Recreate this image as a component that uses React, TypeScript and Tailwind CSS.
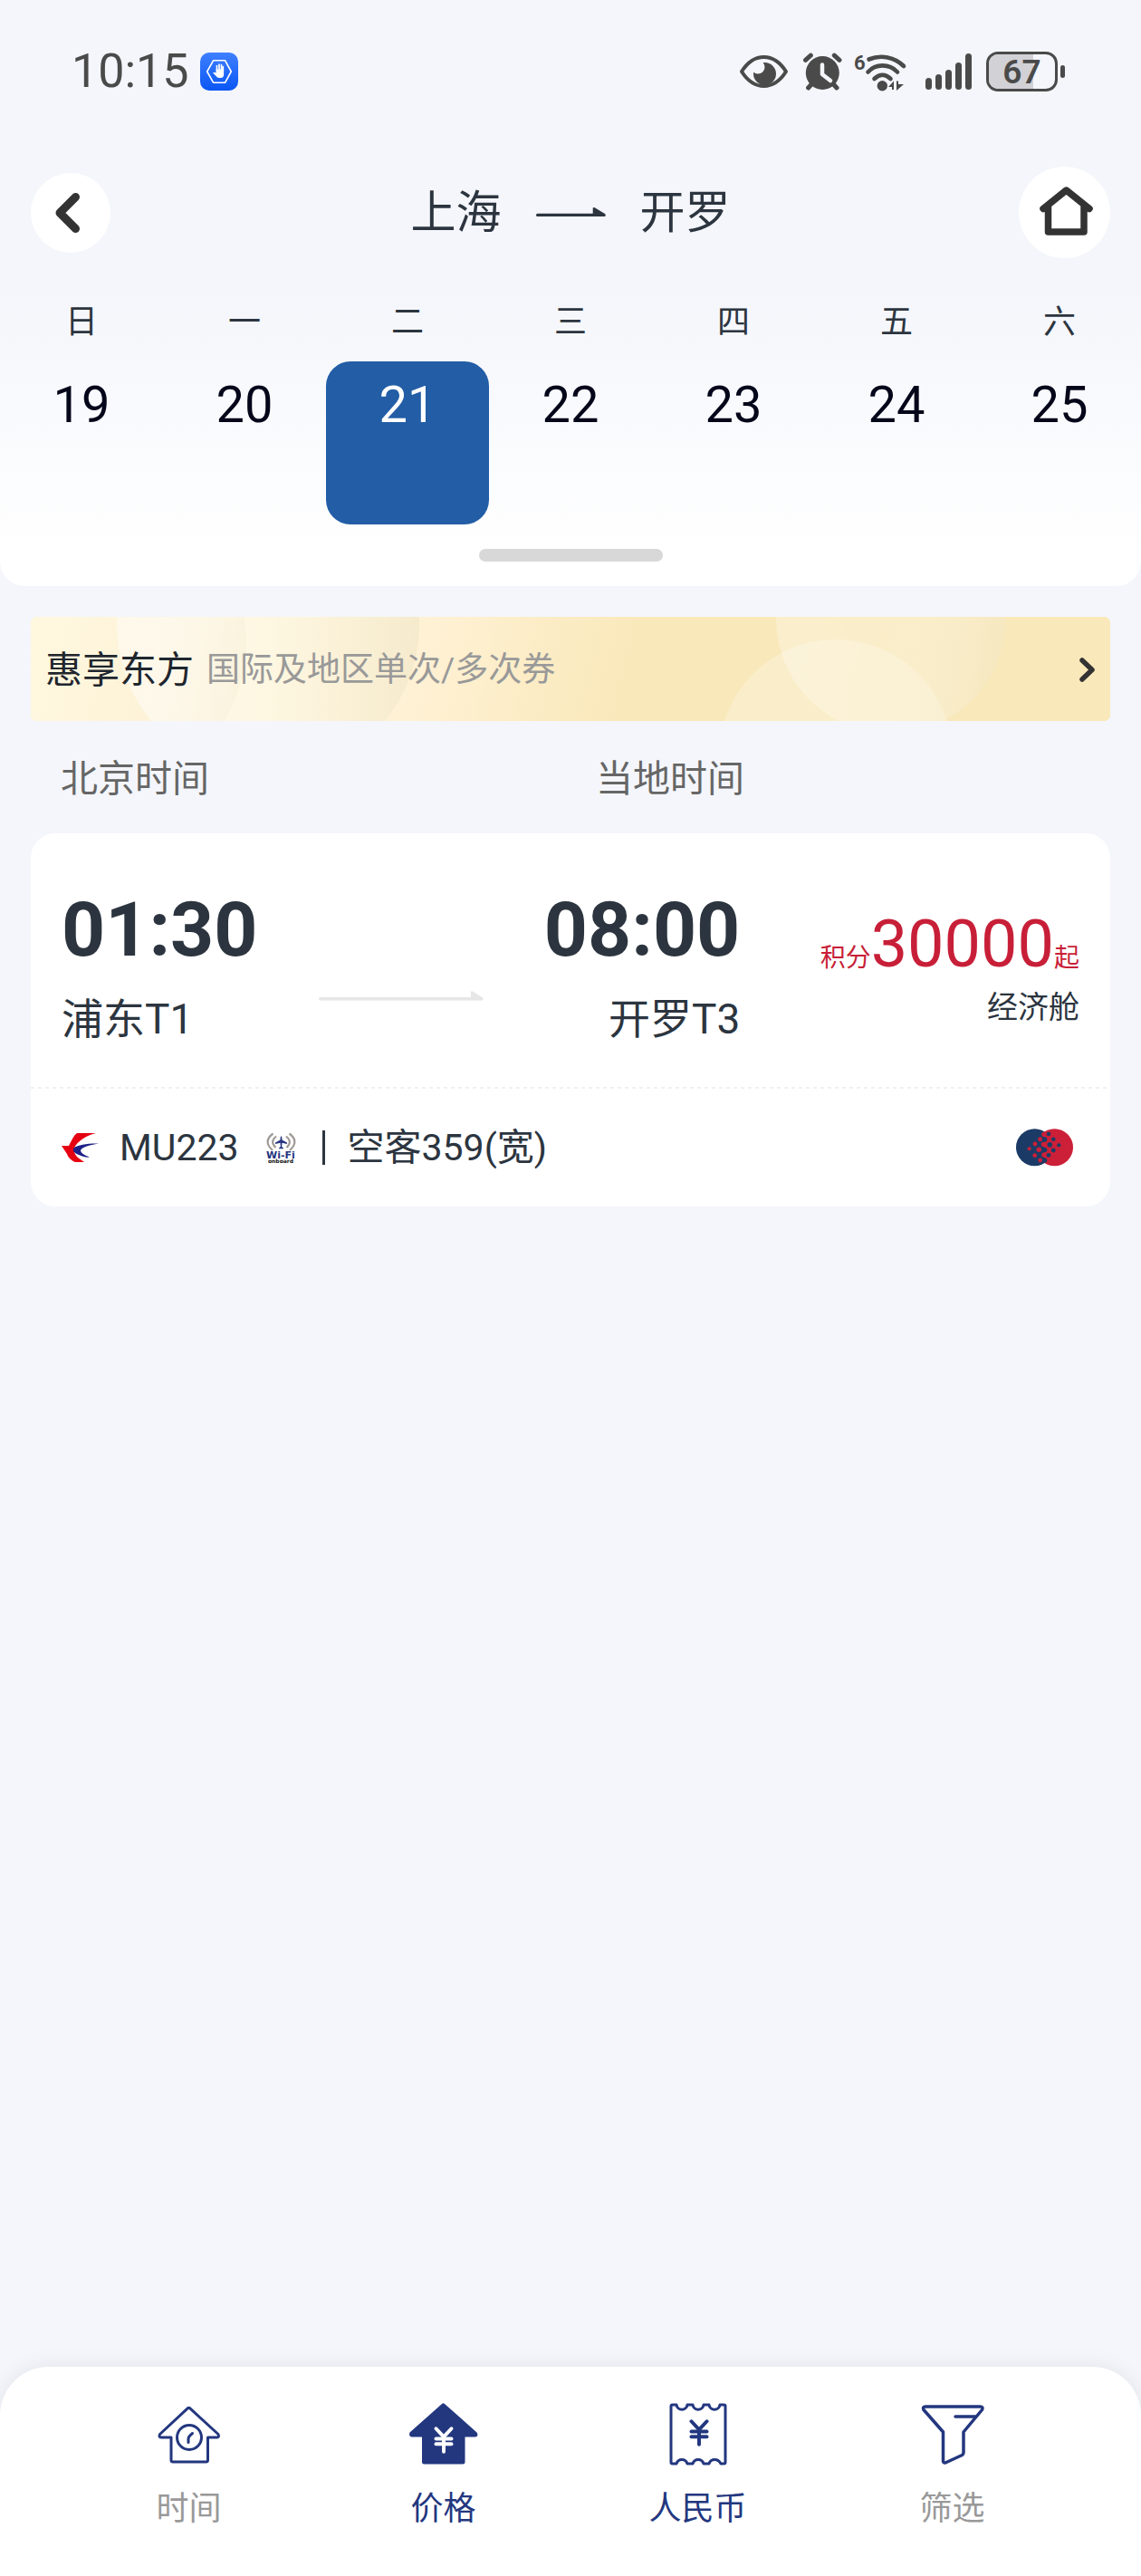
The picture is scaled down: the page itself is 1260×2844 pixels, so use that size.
import { useState } from "react";
import { JapaneseYen } from "lucide-react";
import clsx from "clsx";

const days = [
  { week: "日", date: 19 },
  { week: "一", date: 20 },
  { week: "二", date: 21 },
  { week: "三", date: 22 },
  { week: "四", date: 23 },
  { week: "五", date: 24 },
  { week: "六", date: 25 },
];

const tabs = [
  { label: "时间", icon: ClockHouseIcon, active: false },
  { label: "价格", icon: PriceHouseIcon, active: true },
  { label: "人民币", icon: ReceiptIcon, active: true },
  { label: "筛选", icon: FunnelIcon, active: false },
];

/* Status bar */

function ShieldAppIcon() {
  return (
    <svg width="42" height="42" viewBox="0 0 42 42" aria-hidden="true">
      <defs>
        <linearGradient id="appBg" x1="0" y1="0" x2="0" y2="1">
          <stop offset="0" stopColor="#3f80ff" />
          <stop offset="1" stopColor="#0a56f5" />
        </linearGradient>
      </defs>
      <rect width="42" height="42" rx="10" fill="url(#appBg)" />
      <path
        d="M7.7 21L14.7 8.7H27.5L34.3 21L27.5 33.3H14.7Z"
        fill="none"
        stroke="#fff"
        strokeWidth="1.6"
        strokeLinejoin="round"
      />
      <path
        d="M18.5 20V14.5M21 19V13.2M23.5 19V13.7M25.3 20V15.5"
        stroke="#fff"
        strokeWidth="1.7"
        strokeLinecap="round"
      />
      <path d="M17.6 18.5H26.1V24.5Q26 28 22.5 28H21Q19.5 28 18.3 26.7L14.2 22.6Q15 21 17.6 22.4Z" fill="#fff" />
    </svg>
  );
}

function EyeIcon() {
  return (
    <svg width="55" height="40" viewBox="0 0 55 40" aria-hidden="true">
      <path
        d="M3 20C10 9 18 4 27.5 4S45 9 52 20C45 31 37 36 27.5 36S10 31 3 20Z"
        fill="none"
        stroke="#4a4a4a"
        strokeWidth="4"
        strokeLinejoin="round"
      />
      <circle cx="28.5" cy="22.5" r="12.5" fill="#4a4a4a" />
      <circle cx="21" cy="15" r="7.5" fill="#f4f6fb" />
    </svg>
  );
}

function AlarmIcon() {
  return (
    <svg width="45" height="42" viewBox="0 0 45 42" fill="none" strokeLinecap="round" aria-hidden="true">
      <circle cx="22.3" cy="22.5" r="18.5" fill="#4a4a4a" />
      <path
        d="M3.5 8.3L9.3 3.2M35.3 3.2L41 8.3M6.6 39L12 33M38 39L32.6 33"
        stroke="#4a4a4a"
        strokeWidth="5"
      />
      <path d="M22 13.5V24L31 31" stroke="#f4f6fb" strokeWidth="4.5" strokeLinejoin="round" />
    </svg>
  );
}

function WifiSixIcon() {
  return (
    <svg className="overflow-visible" width="60" height="46" viewBox="0 0 60 46" aria-hidden="true">
      <text x="1" y="21" fontSize="22" fontWeight="700" fill="#4a4a4a">
        6
      </text>
      <g fill="none" stroke="#4a4a4a" strokeWidth="4.6" strokeLinecap="round">
        <path d="M17.5 9.5C31 4 46 7 56 17" />
        <path d="M16.5 23.5C25 14 40 14 49 23.5" />
        <path d="M23.5 31C29 25.5 36 25.5 41.5 31" />
      </g>
      <circle cx="32.3" cy="38.7" r="5.7" fill="#4a4a4a" />
      <path d="M39 40L45 33.5V43H43V40ZM48 33.5H50V37H56L48 44Z" fill="#4a4a4a" />
    </svg>
  );
}

function SignalIcon() {
  return (
    <svg width="52" height="42" viewBox="0 0 52 42" fill="#4a4a4a" aria-hidden="true">
      <rect x="0" y="28" width="7" height="13" rx="3.5" />
      <rect x="11" y="24" width="7" height="17" rx="3.5" />
      <rect x="22" y="19" width="7" height="22" rx="3.5" />
      <rect x="33" y="11" width="7" height="30" rx="3.5" />
      <rect x="44" y="1" width="7" height="40" rx="3.5" />
    </svg>
  );
}

function Battery({ level }: { level: number }) {
  return (
    <div className="flex items-center gap-[3px]">
      <div className="relative flex h-11 w-[79px] items-center justify-center overflow-hidden rounded-[13px] border-3 border-[#4a4a4a]">
        <div className="absolute inset-y-0 left-0 bg-[#d1d1d6]" style={{ width: `${level}%` }} />
        <span className="relative text-[37px] leading-none font-semibold">{level}</span>
      </div>
      <div className="h-[14px] w-[5px] rounded-full bg-[#4a4a4a]" />
    </div>
  );
}

function StatusBar() {
  return (
    <div className="flex h-11 items-center justify-between pr-[84px] pl-[79px] text-[#4a4a4a]">
      <div className="flex items-center gap-3">
        <span className="text-[52px] leading-none">10:15</span>
        <ShieldAppIcon />
      </div>
      <div className="flex items-center">
        <EyeIcon />
        <span className="ml-[15px]">
          <AlarmIcon />
        </span>
        <span className="ml-[11px]">
          <WifiSixIcon />
        </span>
        <span className="ml-5">
          <SignalIcon />
        </span>
        <span className="ml-[15px]">
          <Battery level={67} />
        </span>
      </div>
    </div>
  );
}

/* Header */

function RouteArrow() {
  return (
    <svg width="77" height="11" viewBox="0 0 77 11" aria-hidden="true">
      <path d="M1.5 6.8H62.7V0.5Q64 -0.5 66 1L76 7Q77.5 8.5 76 10H1.5Q0 10 0 8.4Q0 6.8 1.5 6.8Z" fill="#2c353f" />
    </svg>
  );
}

function Header() {
  const [selected, setSelected] = useState(21);

  return (
    <header className="rounded-b-[27px] bg-linear-to-b from-[#f4f6fb] from-50% to-white to-95% pt-[57px] pb-[27px]">
      <StatusBar />

      <div className="mt-[83px] flex items-center justify-between px-[34px]">
        <div className="flex-1">
          <button aria-label="返回" className="flex size-[88px] items-center justify-center rounded-full bg-white">
            <svg width="88" height="88" viewBox="0 0 88 88" fill="none" aria-hidden="true">
              <path
                d="M49.5 26.5L32 44L49.5 61.5"
                stroke="#333"
                strokeWidth="9"
                strokeLinecap="round"
                strokeLinejoin="round"
              />
            </svg>
          </button>
        </div>
        <h1 className="flex items-center gap-[38px] text-[50px] leading-[54px] text-[#2c353f]">
          <span>上海</span>
          <RouteArrow />
          <span>开罗</span>
        </h1>
        <div className="flex flex-1 justify-end">
          <button aria-label="首页" className="flex size-[101px] items-center justify-center rounded-full bg-white">
            <svg width="101" height="101" viewBox="0 0 101 101" fill="none" aria-hidden="true">
              <path
                d="M27 46.5L52.5 26L78 46.5M32.5 44V72H72V44"
                stroke="#333"
                strokeWidth="7.5"
                strokeLinecap="round"
                strokeLinejoin="round"
              />
            </svg>
          </button>
        </div>
      </div>

      {/* Week strip */}
      <div className="mt-11 grid grid-cols-7 text-center">
        {days.map((day) => (
          <div key={day.date}>
            <div className="text-[36px] leading-[54px] text-[#2c353f]">{day.week}</div>
            <button
              onClick={() => setSelected(day.date)}
              aria-pressed={selected === day.date}
              className={clsx(
                "mt-4 flex aspect-square w-full justify-center rounded-[27px] pt-5 text-[56px] leading-[56px]",
                selected === day.date ? "bg-[#225da6] text-white" : "text-[#04061a]"
              )}
            >
              {day.date}
            </button>
          </div>
        ))}
      </div>

      <div className="mx-auto mt-[27px] h-[14px] w-[203px] rounded-full bg-[#d8d8d8]" />
    </header>
  );
}

/* Promo banner */

function PromoBanner() {
  return (
    <a
      href="#coupon"
      className="relative flex h-[115px] items-center overflow-hidden rounded-[7px] bg-[#f9e8b9] pt-[2px] pr-[17px] pl-4"
    >
      <svg
        className="absolute inset-0 h-full w-full"
        viewBox="0 0 1192 115"
        preserveAspectRatio="xMidYMid slice"
        aria-hidden="true"
      >
        <defs>
          <linearGradient id="promoBg" gradientUnits="userSpaceOnUse" x1="0" y1="0" x2="640" y2="170">
            <stop offset="0" stopColor="#fff8df" />
            <stop offset="0.2" stopColor="#fdf3d9" />
            <stop offset="0.65" stopColor="#fff1d4" />
            <stop offset="1" stopColor="#f9e8b9" />
          </linearGradient>
          <linearGradient id="promoLeft" x1="0" y1="0" x2="1" y2="0">
            <stop offset="0" stopColor="#fff" stopOpacity="0.3" />
            <stop offset="0.5" stopColor="#fef8e3" stopOpacity="0.85" />
            <stop offset="1" stopColor="#f4e9cb" stopOpacity="0.85" />
          </linearGradient>
          <linearGradient id="promoInner" gradientUnits="userSpaceOnUse" x1="94" y1="0" x2="238" y2="20">
            <stop offset="0" stopColor="#fff" stopOpacity="0.15" />
            <stop offset="1" stopColor="#f8f0d9" stopOpacity="0.6" />
          </linearGradient>
          <linearGradient id="promoRight" gradientUnits="userSpaceOnUse" x1="850" y1="20" x2="1075" y2="60">
            <stop offset="0" stopColor="#fff" stopOpacity="0.28" />
            <stop offset="0.4" stopColor="#fff" stopOpacity="0.22" />
            <stop offset="1" stopColor="#f3e6c0" stopOpacity="0.6" />
          </linearGradient>
          <clipPath id="promoClip">
            <circle cx="262" cy="9" r="167" />
          </clipPath>
        </defs>
        <rect width="1192" height="115" fill="url(#promoBg)" />
        <circle cx="262" cy="9" r="167" fill="url(#promoLeft)" />
        <circle cx="76" cy="29" r="162" fill="url(#promoInner)" clipPath="url(#promoClip)" />
        <circle cx="889" cy="154" r="129" fill="#fff" fillOpacity="0.25" />
        <circle cx="950" cy="2" r="127" fill="url(#promoRight)" />
      </svg>
      <strong className="relative text-[41px] leading-[54px] font-normal text-[#1f262e]">惠享东方</strong>
      <span className="relative ml-[14px] text-[37px] leading-[54px] text-[#999]">国际及地区单次/多次券</span>
      <svg className="relative ml-auto" width="17" height="27" viewBox="0 0 17 27" fill="none" aria-hidden="true">
        <path d="M3 3L14 13.5L3 24" stroke="#333" strokeWidth="5.5" strokeLinecap="round" strokeLinejoin="round" />
      </svg>
    </a>
  );
}

/* Flight card */

function AirlineLogo() {
  return (
    <svg width="42" height="34" viewBox="0 0 42 34" aria-hidden="true">
      <path
        d="M17 1H38C28 3 20 9 16 14C12 19 14 24 18 28L25 33H15C10 31 7 27 6 24C4 21 2 18 0 15H8C11 9 13 4 17 1Z"
        fill="#e50012"
      />
      <path
        d="M41 12.5C30 12 18 14 14 17C11 20 14 23 19 25C23 27 28 28 31 27.5C26 26 21 23 21 20C22 17 30 14 41 12.5Z"
        fill="#1d2087"
      />
    </svg>
  );
}

function WifiOnboardIcon() {
  return (
    <svg className="overflow-visible" width="33" height="34" viewBox="0 0 33 34" role="img" aria-label="Wi-Fi onboard">
      <g fill="none" stroke="#9f9a96" strokeWidth="2.2">
        <path d="M7.5 1.5Q-4 10 7 20" />
        <path d="M11 4.5Q3.5 10.5 10.5 17" />
        <path d="M25.5 1.5Q37 10 26 20" />
        <path d="M22 4.5Q29.5 10.5 22.5 17" />
      </g>
      <path
        d="M16.5 4Q17.6 5 17.5 8.5L23 11.5V13L17.5 11.8L17.2 16L19 17.5V18.3H14V17.5L15.8 16L15.5 11.8L10 13V11.5L15.5 8.5Q15.4 5 16.5 4Z"
        fill="#26357f"
      />
      <text x="16" y="29" textAnchor="middle" fontSize="11" fontWeight="700" fill="#26357f" fontFamily="DejaVu Sans, sans-serif">
        Wi-Fi
      </text>
      <text x="16" y="34" textAnchor="middle" fontSize="6" fontWeight="700" fill="#111" fontFamily="DejaVu Sans, sans-serif">
        onboard
      </text>
    </svg>
  );
}

const redDots = [
  [26.7, 11.7, 2.5],
  [21, 17, 2.4],
  [14.7, 22.3, 2],
  [25.3, 23.3, 2.8],
  [20.7, 29.7, 2.4],
  [26.7, 35, 2.4],
  [31, 6.5, 2.8],
  [30.5, 17.5, 2.8],
  [31, 29, 2.8],
];

const blueDots = [
  [36, 6, 2.3],
  [41.3, 11.7, 2.3],
  [37.3, 17.7, 2.8],
  [47.3, 18.3, 2.1],
  [41.3, 24, 2.4],
  [36, 29.3, 2.4],
  [31.5, 12, 2.8],
  [31.5, 23.5, 2.8],
  [31.5, 35, 2.8],
];

function PartnerBadge() {
  return (
    <svg width="63" height="42" viewBox="0 0 63 42" role="img" aria-label="联合会员">
      <defs>
        <clipPath id="badgeRight">
          <rect x="31" y="0" width="32" height="42" />
        </clipPath>
      </defs>
      <circle cx="20.5" cy="20.7" r="20.5" fill="#1b3b66" />
      <circle cx="42.5" cy="20.7" r="20.5" fill="#cc1f38" clipPath="url(#badgeRight)" />
      {redDots.map(([x, y, r]) => (
        <circle key={`${x}-${y}`} cx={x} cy={y} r={r} fill="#cc1f38" />
      ))}
      {blueDots.map(([x, y, r]) => (
        <circle key={`${x}-${y}`} cx={x} cy={y} r={r} fill="#1b3b66" />
      ))}
    </svg>
  );
}

function FlightStop({ time, place, align }: { time: string; place: string; align?: "right" }) {
  return (
    <div className={clsx("flex flex-col gap-[29px]", align === "right" && "text-right")}>
      <time className="text-[84px] leading-[84px] font-bold">{time}</time>
      <span className="text-[46px] leading-[54px]">{place}</span>
    </div>
  );
}

function FlightCard() {
  return (
    <article className="rounded-[27px] bg-white text-[#2c353f]">
      <div className="grid grid-cols-3 px-[34px] pt-[65px] pb-12">
        <div className="col-span-2 flex justify-between">
          <FlightStop time="01:30" place="浦东T1" />
          <svg className="mt-[109px]" width="182" height="11" viewBox="0 0 182 11" aria-hidden="true">
            <path
              d="M1.5 7H168V1.5Q168 -0.5 170 0.5L181 7.5Q182.5 10.5 180 10.5H1.5Q0 10.5 0 8.7Q0 7 1.5 7Z"
              fill="#e6e6e6"
            />
          </svg>
          <FlightStop time="08:00" place="开罗T3" align="right" />
        </div>
        <div className="flex flex-col items-end gap-[9px] pt-[22px]">
          <div className="text-[28px] leading-[30px] text-[#c81f38]">
            积分<span className="text-[72px] leading-[72px]">30000</span>起
          </div>
          <span className="text-[34px] leading-[48px]">经济舱</span>
        </div>
      </div>

      <svg className="block h-[2px] w-full" aria-hidden="true">
        <line x1="0" y1="1" x2="100%" y2="1" stroke="#f0f0f0" strokeWidth="2" strokeDasharray="4 4" />
      </svg>

      <div className="flex items-center px-[34px] py-[38px] text-[41px] leading-[54px]">
        <AirlineLogo />
        <span className="ml-[22px]">MU223</span>
        <span className="ml-[30px]">
          <WifiOnboardIcon />
        </span>
        <span className="ml-[29px] h-[38px] w-[3px] bg-[#2c353f]" />
        <span className="ml-[25px]">空客359(宽)</span>
        <span className="mr-[7px] ml-auto">
          <PartnerBadge />
        </span>
      </div>
    </article>
  );
}

/* Bottom tabs */

function ClockHouseIcon() {
  return (
    <svg width="70" height="70" viewBox="0 0 70 70" fill="none" stroke="#23377f" strokeWidth="3" strokeLinejoin="round" strokeLinecap="round" aria-hidden="true">
      <path d="M33.5 6.7Q34.5 5.8 35.5 6.7L67 35.5Q68.5 39 65.5 39H55.5V64Q55.5 66 53.5 66H17Q15 66 15 64V39H4Q1 39 2.5 35.5Z" />
      <circle cx="35" cy="39" r="13.5" fill="#fff" />
      <path d="M34 44.5V40.5Q34 38 38.5 34.5" />
    </svg>
  );
}

function PriceHouseIcon() {
  return (
    <svg width="76" height="70" viewBox="0 0 76 70" aria-hidden="true">
      <path
        d="M36 2Q37.5 0.5 39 2L74.5 33.5Q77 38 73 38.5H61.5V66Q61.5 68.5 59 68.5H16.5Q14 68.5 14 66V38.5H3Q-1 38 0.5 33.5Z"
        fill="#23377f"
      />
      <JapaneseYen x={21} y={25} size={34} color="#fff" strokeWidth={2.8} />
    </svg>
  );
}

function ReceiptIcon() {
  return (
    <svg width="66" height="70" viewBox="0 0 66 70" fill="none" aria-hidden="true">
      <path
        d="M3 4.5Q3 3 4.5 3H9C10 10 20 10 21 3H27C28 10 38 10 39 3H45C46 10 56 10 57 3H61.5Q63 3 63 4.5V66.5Q63 68 61.5 68H58C55 62 47 62 45 68H39C37 62 29 62 27 68H21C19 62 11 62 9 68H4.5Q3 68 3 66.5Z"
        stroke="#23377f"
        strokeWidth="3"
        strokeLinejoin="round"
      />
      <JapaneseYen x={17} y={17} size={34} color="#23377f" strokeWidth={2.8} />
    </svg>
  );
}

function FunnelIcon() {
  return (
    <svg width="70" height="70" viewBox="0 0 70 70" fill="none" stroke="#23377f" strokeWidth="3.5" strokeLinejoin="round" strokeLinecap="round" aria-hidden="true">
      <path d="M5 5H65.5Q69 5 67.5 8.5L47 33V56Q47 57.5 45.5 58.5L27 67Q24.5 67.5 24.5 65V33L3 8.5Q1.5 5 5 5Z" />
      <path d="M38 16H60" />
    </svg>
  );
}

function BottomTabs() {
  return (
    <nav className="mt-auto grid grid-cols-4 rounded-t-[54px] bg-white px-[68px] pt-[39px] pb-[47px] shadow-[0_0_24px_rgba(0,0,0,0.08)]">
      {tabs.map(({ label, icon: Icon, active }) => (
        <button key={label} className="flex flex-col items-center gap-[21px]">
          <Icon />
          <span className={clsx("text-[36px] leading-[54px]", active ? "text-[#23377f]" : "text-[#999]")}>{label}</span>
        </button>
      ))}
    </nav>
  );
}

export default function App() {
  return (
    <div className="flex min-h-screen flex-col bg-[#f4f6fb] font-[Roboto,'Noto_Sans_CJK_SC',sans-serif]">
      <Header />
      <main className="px-[34px] pt-[34px] pb-10">
        <PromoBanner />
        <div className="grid grid-cols-2 pt-[37px] pb-[33px] text-[41px] leading-[54px] text-[#666]">
          <span className="pl-[33px]">北京时间</span>
          <span className="pl-7">当地时间</span>
        </div>
        <FlightCard />
      </main>
      <BottomTabs />
    </div>
  );
}
